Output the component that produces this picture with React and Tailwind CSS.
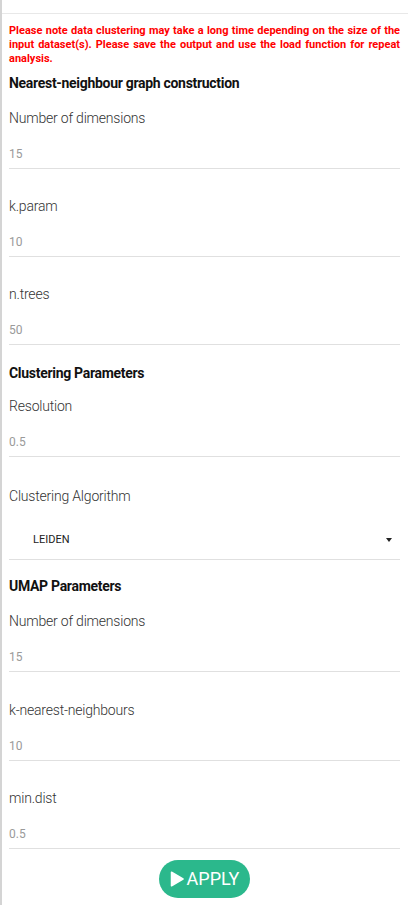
import React from "react";

const Field = ({ label, value, className = "" }) => (
  <div className={className}>
    <div className="text-[14px] leading-[20px] font-light tracking-[-0.2px] text-[#333]">{label}</div>
    <div className="mt-[18px] pb-[6px] text-[12px] leading-[16px] text-[#9a9a9a] border-b border-[#e0e0e0]">
      {value}
    </div>
  </div>
);

const Heading = ({ children, className = "" }) => (
  <div className={`text-[14px] leading-[20px] font-bold tracking-[-0.3px] text-[#111] ${className}`}>
    {children}
  </div>
);

export default function App() {
  return (
    <div
      className="min-h-[905px] w-[408px] border-l-2 border-[#d4d4d4] bg-white"
      style={{ fontFamily: "Roboto, 'Liberation Sans', sans-serif" }}
    >
      <div className="h-[14px] border-b border-[#e8e8e8]" />

      <div className="pl-[7px] pr-[8px]">
        {/* Warning */}
        <p className="mt-[10px] text-[11px] leading-[14px] font-bold text-[#ff0000] text-justify">
          Please note data clustering may take a long time depending on the size of the
          input dataset(s). Please save the output and use the load function for repeat
          analysis.
        </p>

        {/* Nearest-neighbour */}
        <Heading className="mt-[7px]">Nearest-neighbour graph construction</Heading>
        <Field className="mt-[15px]" label="Number of dimensions" value="15" />
        <Field className="mt-[27px]" label="k.param" value="10" />
        <Field className="mt-[27px]" label="n.trees" value="50" />

        {/* Clustering */}
        <Heading className="mt-[18px]">Clustering Parameters</Heading>
        <Field className="mt-[13px]" label="Resolution" value="0.5" />

        <div className="mt-[29px]">
          <div className="text-[14px] leading-[20px] font-light tracking-[-0.2px] text-[#333]">Clustering Algorithm</div>
          <div className="mt-[26px] flex items-center justify-between pl-[24px] pr-[8px] pb-[11px] border-b border-[#e0e0e0]">
            <span className="text-[11px] leading-[16px] text-[#222]">LEIDEN</span>
            <span className="w-0 h-0 border-l-[3px] border-r-[3px] border-t-[4px] border-l-transparent border-r-transparent border-t-[#222]" />
          </div>
        </div>

        {/* UMAP */}
        <Heading className="mt-[16px]">UMAP Parameters</Heading>
        <Field className="mt-[15px]" label="Number of dimensions" value="15" />
        <Field className="mt-[28px]" label="k-nearest-neighbours" value="10" />
        <Field className="mt-[27px]" label="min.dist" value="0.5" />

        <div className="mt-[11px] flex justify-center">
          <button className="flex items-center gap-[3px] h-[38px] px-[11px] rounded-full bg-[#2bb88c] text-white text-[18px] leading-none">
            <svg width="14" height="16" viewBox="0 0 14 16">
              <path d="M1.5 1.2 L13 8 L1.5 14.8 Z" fill="white" stroke="white" strokeWidth="1.5" strokeLinejoin="round" />
            </svg>
            <span>APPLY</span>
          </button>
        </div>
      </div>
    </div>
  );
}
